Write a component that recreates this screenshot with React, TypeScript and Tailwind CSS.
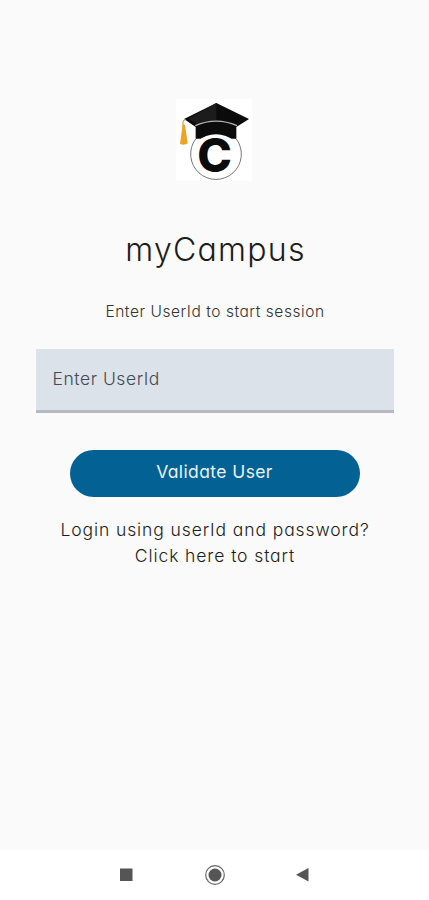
function CampusLogo() {
  return (
    <svg viewBox="0 0 300 300" className="w-[100px] h-[100px]" aria-label="myCampus">
      <rect x="33" y="26" width="228" height="246" fill="#ffffff" />
      <path d="M154 39 L252 87 L214 111 V146 H92 V111 L57 87 Z" fill="#0b0b0b" />
      <path d="M154 39 V90 L96 102 L70 86 Z" fill="#1c1c1c" />
      <path d="M91 107 Q154 80 216 107" fill="none" stroke="#b5b5b5" strokeWidth="4" />
      <ellipse cx="153" cy="201" rx="77" ry="68" fill="#ffffff" />
      <path d="M92 147 A76 76 0 1 0 214 147" fill="none" stroke="#777777" strokeWidth="3" />
      <text
        x="149"
        y="245"
        textAnchor="middle"
        className="font-['Inter',sans-serif] font-extrabold text-[140px]"
        fill="#0b0b0b"
      >
        C
      </text>
      <path d="M62 88 L54 93 V112" fill="none" stroke="#c98a2b" strokeWidth="3" />
      <path d="M53 104 L60 104 L68 160 Q57 168 45 161 Z" fill="#eda323" />
    </svg>
  );
}

function NavBar() {
  return (
    <nav className="h-[50px] bg-white">
      <svg viewBox="0 0 429 50" className="w-full h-full">
        <rect x="120" y="18.5" width="12.5" height="12.5" fill="#555555" />
        <circle cx="215" cy="25" r="9.3" fill="none" stroke="#666666" strokeWidth="1.2" />
        <circle cx="215" cy="25" r="6.5" fill="#555555" />
        <path d="M296 24.8 L308.5 18 V31.5 Z" fill="#555555" />
      </svg>
    </nav>
  );
}

export default function App() {
  return (
    <div className="flex flex-col h-[900px] w-[429px] bg-[#fafafa] font-['Inter',sans-serif] [font-feature-settings:'cv11'] text-[#1c1c1c]">
      <main className="flex flex-1 flex-col items-center pt-[90px]">
        <CampusLogo />
        <h1 className="mt-[39px] h-[41px] leading-[41px] text-[32px] font-[350] tracking-[1.25px] whitespace-nowrap pl-[2px]">
          myCampus
        </h1>
        <p className="mt-[32px] h-5 leading-5 text-[15.5px] font-[350] tracking-[0.55px] whitespace-nowrap text-[#333333] pl-px">
          Enter UserId to start session
        </p>
        <input
          type="text"
          placeholder="Enter UserId"
          className="mt-[27px] h-[64px] w-[358px] bg-[#dce2ea] border-b-[3px] border-[#b5bac2] pl-[17px] pb-[3px] text-[17.5px] font-[350] tracking-[0.55px] outline-none placeholder:text-[#454950]"
        />
        <button className="mt-[37px] h-[47px] w-[290px] rounded-full bg-[#036293] pb-[3px] text-[17.5px] tracking-[0.4px] text-[#e8f2f8]">
          Validate User
        </button>
        <a className="mt-[20px] pl-px text-center text-[17.5px] leading-[26px] font-[350] tracking-[0.9px] whitespace-nowrap">
          <span className="block">Login using userId and password?</span>
          <span className="block">Click here to start</span>
        </a>
      </main>
      <NavBar />
    </div>
  );
}
